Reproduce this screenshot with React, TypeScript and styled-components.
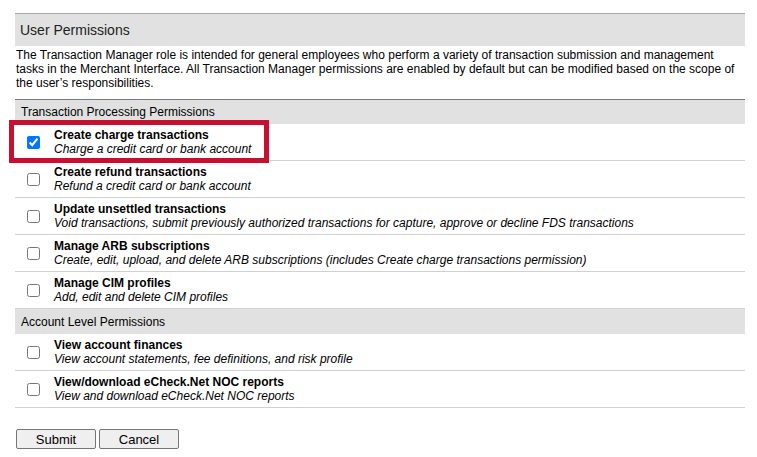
import React from "react";
import styled, { createGlobalStyle } from "styled-components";

const GlobalStyle = createGlobalStyle`
  body {
    margin: 0;
    background: #fff;
    font-family: Arial, "Liberation Sans", sans-serif;
    color: #000;
  }
`;

const Page = styled.div`
  width: 730px;
  padding: 13px 0 0 15px;
`;

const TitleBar = styled.div`
  height: 32px;
  border-top: 1px solid #aaa;
  background: #e1e1e1;
  display: flex;
  align-items: center;
  padding-left: 5px;
  font-size: 14px;
  color: #222;
`;

const Intro = styled.p`
  margin: 2px 0 9px;
  padding-left: 1px;
  font-size: 12px;
  line-height: 14px;
`;

// the header's dark top line sits over the last row's light bottom line
const SectionHeader = styled.div`
  height: 24px;
  border-top: 1px solid #7a7a7a;
  background: #e1e1e1;
  display: flex;
  align-items: center;
  padding-left: 6px;
  font-size: 12px;
  &:not(:first-child) {
    margin-top: -1px;
    height: 25px;
  }
`;

const Row = styled.label`
  position: relative;
  height: 36px;
  border-bottom: 1px solid #d0d0d0;
  display: flex;
  align-items: center;
`;

const Check = styled.input.attrs({ type: "checkbox" })`
  width: 13px;
  height: 13px;
  margin: 0 14px 0 12px;
  flex: none;
`;

const RowText = styled.div`
  display: flex;
  flex-direction: column;
  font-size: 12px;
  line-height: 14px;
  padding-bottom: 1px;
`;

const RowTitle = styled.span`
  font-weight: bold;
`;

const RowNote = styled.span`
  font-style: italic;
`;

const Highlight = styled.div`
  position: absolute;
  left: -6px;
  top: -4px;
  width: 260px;
  height: 43px;
  box-sizing: border-box;
  border: 5px solid #c8102e;
  pointer-events: none;
`;

const Actions = styled.div`
  display: flex;
  gap: 3px;
  margin-top: 21px;
  padding-left: 1px;
`;

const Button = styled.button`
  width: 80px;
  height: 20px;
  padding: 0;
  background: #efefef;
  border: 1px solid #767676;
  border-radius: 2px;
  font-family: Arial, "Liberation Sans", sans-serif;
  font-size: 13px;
  color: #000;
`;

type Permission = { title: string; note: string; checked?: boolean; marked?: boolean };

const sections: { name: string; items: Permission[] }[] = [
  {
    name: "Transaction Processing Permissions",
    items: [
      {
        title: "Create charge transactions",
        note: "Charge a credit card or bank account",
        checked: true,
        marked: true,
      },
      { title: "Create refund transactions", note: "Refund a credit card or bank account" },
      {
        title: "Update unsettled transactions",
        note: "Void transactions, submit previously authorized transactions for capture, approve or decline FDS transactions",
      },
      {
        title: "Manage ARB subscriptions",
        note: "Create, edit, upload, and delete ARB subscriptions (includes Create charge transactions permission)",
      },
      { title: "Manage CIM profiles", note: "Add, edit and delete CIM profiles" },
    ],
  },
  {
    name: "Account Level Permissions",
    items: [
      {
        title: "View account finances",
        note: "View account statements, fee definitions, and risk profile",
      },
      {
        title: "View/download eCheck.Net NOC reports",
        note: "View and download eCheck.Net NOC reports",
      },
    ],
  },
];

export default function App() {
  return (
    <Page>
      <GlobalStyle />
      <TitleBar>User Permissions</TitleBar>
      <Intro>
        The Transaction Manager role is intended for general employees who perform a variety of
        transaction submission and management tasks in the Merchant Interface. All Transaction
        Manager permissions are enabled by default but can be modified based on the scope of the
        user’s responsibilities.
      </Intro>
      <div>
        {sections.map((section) => (
          <React.Fragment key={section.name}>
            <SectionHeader>{section.name}</SectionHeader>
            {section.items.map((item) => (
              <Row key={item.title}>
                <Check defaultChecked={item.checked} />
                <RowText>
                  <RowTitle>{item.title}</RowTitle>
                  <RowNote>{item.note}</RowNote>
                </RowText>
                {item.marked && <Highlight />}
              </Row>
            ))}
          </React.Fragment>
        ))}
      </div>
      <Actions>
        <Button type="button">Submit</Button>
        <Button type="button">Cancel</Button>
      </Actions>
    </Page>
  );
}
